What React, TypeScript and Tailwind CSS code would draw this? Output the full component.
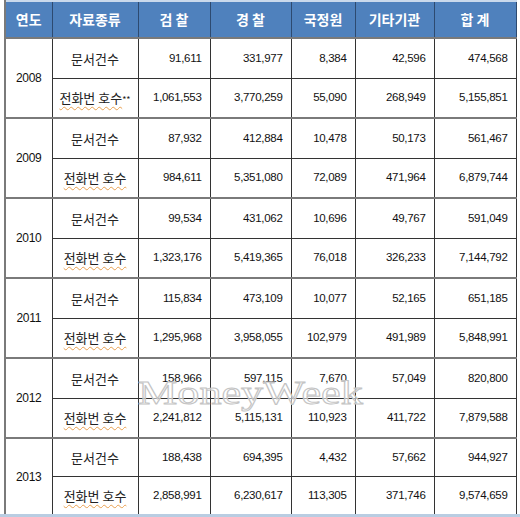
import React from "react";

interface YearData {
  year: string;
  docs: string[];
  phones: string[];
  mark?: boolean;
  last?: boolean;
}

const data: YearData[] = [
  { year: "2008", docs: ["91,611", "331,977", "8,384", "42,596", "474,568"], phones: ["1,061,553", "3,770,259", "55,090", "268,949", "5,155,851"], mark: true },
  { year: "2009", docs: ["87,932", "412,884", "10,478", "50,173", "561,467"], phones: ["984,611", "5,351,080", "72,089", "471,964", "6,879,744"] },
  { year: "2010", docs: ["99,534", "431,062", "10,696", "49,767", "591,049"], phones: ["1,323,176", "5,419,365", "76,018", "326,233", "7,144,792"] },
  { year: "2011", docs: ["115,834", "473,109", "10,077", "52,165", "651,185"], phones: ["1,295,968", "3,958,055", "102,979", "491,989", "5,848,991"] },
  { year: "2012", docs: ["158,966", "597,115", "7,670", "57,049", "820,800"], phones: ["2,241,812", "5,115,131", "110,923", "411,722", "7,879,588"] },
  { year: "2013", docs: ["188,438", "694,395", "4,432", "57,662", "944,927"], phones: ["2,858,991", "6,230,617", "113,305", "371,746", "9,574,659"], last: true },
];

const headers = ["연도", "자료종류", "검 찰", "경 찰", "국정원", "기타기관", "합 계"];
const widths = [47, 86, 72, 81, 64, 79, 82];

const kr = "font-['Noto_Sans_CJK_KR',sans-serif]";
const num = "font-['Liberation_Sans',sans-serif] text-[11.5px] tracking-[-0.3px] text-right pr-[8px] text-[#111]";

const Block = ({ d }: { d: YearData }) => {
  const h = d.last ? "h-[38px]" : "h-[40px]";
  return (
    <>
      <tr className={`${h} border-t-2 border-t-[#7a7a7a]`}>
        <td rowSpan={2} className="border-l-2 border-l-[#7a7a7a] border-r border-r-[#333] text-center font-['Liberation_Sans',sans-serif] text-[12px] tracking-[-0.3px] text-[#111]">
          {d.year}
        </td>
        <td className={`border-r border-r-[#333] text-center text-[13px] text-[#222] ${kr}`}>문서건수</td>
        {d.docs.map((v, i) => (
          <td key={i} className={`${num} border-r border-r-[#333]`}>{v}</td>
        ))}
      </tr>
      <tr className={`${h} border-t border-t-[#333]`}>
        <td className={`border-r border-r-[#333] text-center text-[13px] text-[#222] ${kr}`}>
          <span className="underline decoration-wavy decoration-[#e8a050] decoration-1 underline-offset-[3px]">전화번 호수</span>
          {d.mark && <span className="text-[9px] align-middle">**</span>}
        </td>
        {d.phones.map((v, i) => (
          <td key={i} className={`${num} border-r border-r-[#333]`}>{v}</td>
        ))}
      </tr>
    </>
  );
};

export default function App() {
  return (
    <div className="w-[520px] h-[517px] bg-white overflow-hidden relative">
      <div className="pl-[4px]">
        <table className="table-fixed border-collapse w-[511px]">
          <colgroup>
            {widths.map((w, i) => (
              <col key={i} style={{ width: w }} />
            ))}
          </colgroup>
          <thead>
            <tr className="h-[37px] bg-[#4f81bd] border-t-2 border-t-[#c9d9ec]">
              {headers.map((t, i) => (
                <th
                  key={i}
                  className={`text-white font-bold text-[14px] text-center border-r border-r-[#2d4a70] ${kr} ${i === 0 ? "border-l-2 border-l-[#7a7a7a]" : ""}`}
                >
                  {t}
                </th>
              ))}
            </tr>
          </thead>
          <tbody>
            {data.map((d) => (
              <Block key={d.year} d={d} />
            ))}
          </tbody>
        </table>
      </div>
      <div className="absolute left-0 right-0 bottom-0 h-[3px] bg-[#b9cde2]" />
      <div className="absolute left-[138px] top-[376px] pointer-events-none origin-left scale-x-[1.3] font-['Liberation_Serif',serif] text-[34px] leading-none text-[rgba(255,255,255,0.55)] [-webkit-text-stroke:1px_#c4c4c4]">
        MoneyWeek
      </div>
    </div>
  );
}
